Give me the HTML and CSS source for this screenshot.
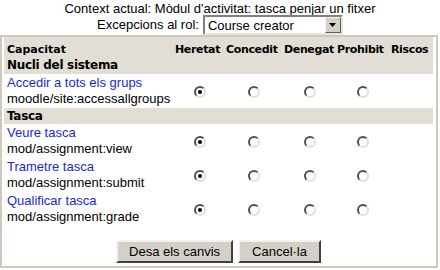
FILE: index.html
```html
<!DOCTYPE html>
<html>
<head>
<meta charset="utf-8">
<link rel="stylesheet" href="styles.css">
</head>
<body>
<div class="ctx">Context actual: Mòdul d'activitat: tasca penjar un fitxer</div>
<div class="rolerow">
  <span>Excepcions al rol:</span>
  <div class="select">
    <span class="sel-text">Course creator</span>
    <span class="sel-btn"><svg width="7" height="4" viewBox="0 0 7 4"><path d="M0 0h7L3.5 4z" fill="#000"/></svg></span>
  </div>
</div>
<div class="box">
  <table class="caps">
    <thead>
      <tr class="hdr">
        <th class="c-name">Capacitat</th>
        <th class="c1">Heretat</th>
        <th class="c2">Concedit</th>
        <th class="c3">Denegat</th>
        <th class="c4">Prohibit</th>
        <th class="c5">Riscos</th>
      </tr>
    </thead>
    <tbody>
      <tr class="group first"><td colspan="6">Nucli del sistema</td></tr>
      <tr class="cap">
        <td><a href="#">Accedir a tots els grups</a><br><span>moodle/site:accessallgroups</span></td>
        <td><span class="radio on"></span></td>
        <td><span class="radio"></span></td>
        <td><span class="radio"></span></td>
        <td><span class="radio"></span></td>
        <td></td>
      </tr>
      <tr class="group"><td colspan="6">Tasca</td></tr>
      <tr class="cap">
        <td><a href="#">Veure tasca</a><br><span>mod/assignment:view</span></td>
        <td><span class="radio on"></span></td>
        <td><span class="radio"></span></td>
        <td><span class="radio"></span></td>
        <td><span class="radio"></span></td>
        <td></td>
      </tr>
      <tr class="cap">
        <td><a href="#">Trametre tasca</a><br><span>mod/assignment:submit</span></td>
        <td><span class="radio on"></span></td>
        <td><span class="radio"></span></td>
        <td><span class="radio"></span></td>
        <td><span class="radio"></span></td>
        <td></td>
      </tr>
      <tr class="cap">
        <td><a href="#">Qualificar tasca</a><br><span>mod/assignment:grade</span></td>
        <td><span class="radio on"></span></td>
        <td><span class="radio"></span></td>
        <td><span class="radio"></span></td>
        <td><span class="radio"></span></td>
        <td></td>
      </tr>
    </tbody>
  </table>
  <div class="buttons">
    <button class="btn">Desa els canvis</button>
    <button class="btn">Cancel·la</button>
  </div>
</div>
</body>
</html>
```
FILE: styles.css
```css
html, body {
  margin: 0;
  padding: 0;
  background: #fff;
}
body {
  font-family: "Liberation Sans", Arial, sans-serif;
  font-size: 13px;
  color: #000;
}
.ctx {
  text-align: center;
  line-height: 15px;
  height: 15px;
  padding-top: 1px;
  box-sizing: border-box;
}
.rolerow {
  display: flex;
  justify-content: center;
  align-items: flex-start;
  gap: 4px;
  height: 20px;
}
.rolerow > span {
  line-height: 20px;
}
.select {
  display: flex;
  align-items: center;
  width: 140px;
  height: 20px;
  box-sizing: border-box;
  border: 2px solid;
  border-color: #808080 #e8e6df #e8e6df #808080;
  background: #fff;
}
.sel-text {
  flex: 1;
  padding-left: 3px;
}
.sel-btn {
  width: 16px;
  height: 16px;
  margin-right: 0;
  box-sizing: border-box;
  background: #d4d0c8;
  border: 1px solid;
  border-color: #f4f3ee #606060 #606060 #f4f3ee;
  display: flex;
  align-items: center;
  justify-content: center;
}
.box {
  margin: 0 2px 0 0;
  border: 2px solid #cdc9bc;
  background: #fff;
  padding: 0 3px 3px 2px;
}
.caps {
  border-collapse: collapse;
  width: 429px;
  margin: 0;
  table-layout: fixed;
}
.caps th {
  font-family: "DejaVu Sans", Verdana, sans-serif;
  font-weight: bold;
  font-size: 11px;
  letter-spacing: -0.35px;
  text-align: left;
  padding: 0 0 1px 1px;
  height: 19px;
  vertical-align: bottom;
  background: #e2ded5;
  white-space: nowrap;
  overflow: hidden;
}
.caps th.c-name { width: 167px; padding-left: 3px; letter-spacing: 0; }
.caps th.c1 { width: 50px; }
.caps th.c2 { width: 57px; }
.caps th.c3 { width: 52px; }
.caps th.c4 { width: 53px; }
.caps th.c5 { width: 42px; }
.group td {
  font-family: "DejaVu Sans", Verdana, sans-serif;
  font-weight: bold;
  font-size: 12px;
  letter-spacing: -0.3px;
  background: #e2ded5;
  padding: 0 3px;
  height: 16px;
  line-height: 16px;
}
.group.first td {
  height: 17px;
  line-height: 17px;
}
.cap td {
  height: 34px;
  padding: 0;
  text-align: center;
  vertical-align: middle;
}
.cap td:first-child {
  text-align: left;
  padding-left: 3px;
  line-height: 16px;
}
.cap a {
  color: #1a2ad0;
  text-decoration: none;
}
.radio {
  display: inline-block;
  box-sizing: border-box;
  width: 12px;
  height: 12px;
  border-radius: 50%;
  border: 2px solid;
  border-color: #505050 #e0e0e0 #e0e0e0 #505050;
  background: #fff;
  position: relative;
  vertical-align: middle;
}
.radio.on::after {
  content: "";
  position: absolute;
  left: 2px;
  top: 2px;
  width: 4px;
  height: 4px;
  border-radius: 50%;
  background: #000;
}
.buttons {
  display: flex;
  justify-content: center;
  gap: 5px;
  margin-top: 14px;
}
.btn {
  font-family: "Liberation Sans", Arial, sans-serif;
  font-size: 13px;
  color: #000;
  background: #d4d0c8;
  border: 2px solid;
  border-color: #f4f3ee #404040 #404040 #f4f3ee;
  height: 23px;
  padding: 0 11px;
  margin: 0;
}
.btn + .btn {
  padding: 0 12px;
}
```
